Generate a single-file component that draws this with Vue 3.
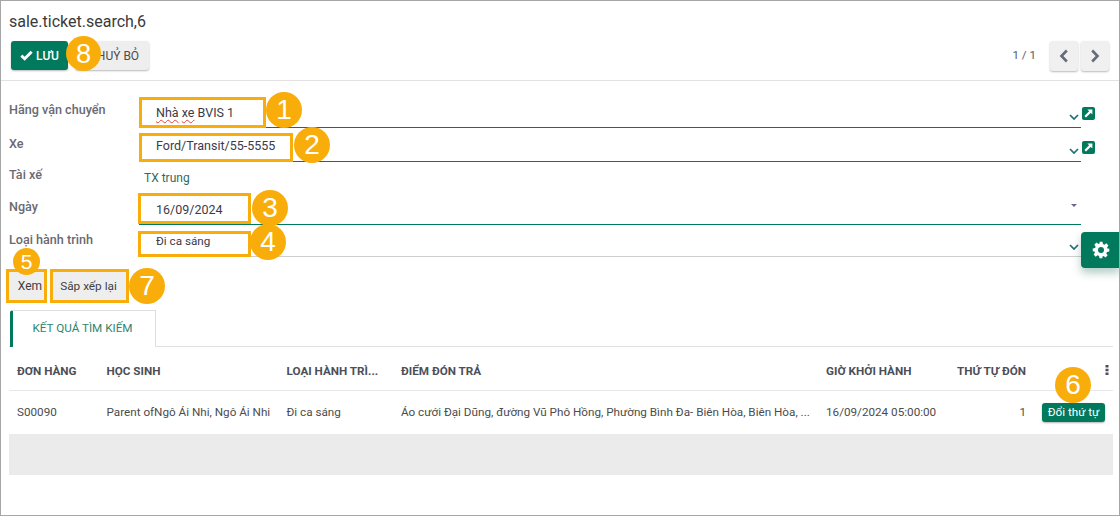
<script setup>
const marks = [
  { n: 1, x: 266, y: 92, s: 36 },
  { n: 2, x: 294, y: 127, s: 36 },
  { n: 3, x: 252, y: 190, s: 36 },
  { n: 4, x: 250, y: 224, s: 36 },
  { n: 5, x: 13, y: 248, s: 27 },
  { n: 6, x: 1055, y: 367, s: 36 },
  { n: 7, x: 129, y: 268, s: 36 },
  { n: 8, x: 66, y: 36, s: 35 },
]
const boxes = [
  { x: 139, y: 97, w: 127, h: 31 },
  { x: 139, y: 133, w: 154, h: 29 },
  { x: 138, y: 193, w: 113, h: 31 },
  { x: 138, y: 231, w: 113, h: 26 },
  { x: 6, y: 269, w: 41, h: 34 },
  { x: 50, y: 269, w: 79, h: 34 },
]
const rows = [
  { label: 'Hãng vận chuyển', value: 'Nhà xe BVIS 1', kind: 'm2o', cls: 'r1', spell: true },
  { label: 'Xe', value: 'Ford/Transit/55-5555', kind: 'm2o', cls: 'r2' },
  { label: 'Tài xế', value: 'TX trung', kind: 'text', cls: 'r3' },
  { label: 'Ngày', value: '16/09/2024', kind: 'date', cls: 'r4' },
  { label: 'Loại hành trình', value: 'Đi ca sáng', kind: 'select', cls: 'r5' },
]
function box(b) {
  return { left: b.x + 'px', top: b.y + 'px', width: b.w + 'px', height: b.h + 'px' }
}
function mark(m) {
  return { left: m.x + 'px', top: m.y + 'px', width: m.s + 'px', height: m.s + 'px', fontSize: (m.s * 0.78) + 'px' }
}
</script>

<template>
  <div class="page">
    <header class="head">
      <div class="title">sale.ticket.search,6</div>
      <div class="bar">
        <button class="btn primary"><svg class="check" viewBox="0 0 14 12"><path d="M1.4 6.2 5 9.6 12.6 2" fill="none" stroke="#fff" stroke-width="3.2"/></svg>LƯU</button>
        <button class="btn cancel">HUỶ BỎ</button>
        <span class="pager">1 / 1</span>
        <button class="btn nav"><svg viewBox="0 0 10 14" width="10" height="14"><path d="M7.8 1.5 2.5 7l5.3 5.5" fill="none" stroke="#666a7a" stroke-width="2.6"/></svg></button>
        <button class="btn nav"><svg viewBox="0 0 10 14" width="10" height="14"><path d="M2.2 1.5 7.5 7l-5.3 5.5" fill="none" stroke="#666a7a" stroke-width="2.6"/></svg></button>
      </div>
    </header>

    <main class="form">
      <div v-for="r in rows" :key="r.label" class="row" :class="r.cls">
        <label class="label">{{ r.label }}</label>
        <div class="field" :class="r.kind">
          <span class="val"><template v-if="r.spell"><span class="wavy">Nhà</span> <span class="wavy">xe</span> BVIS 1</template><template v-else>{{ r.value }}</template></span>
          <svg v-if="r.kind === 'm2o' || r.kind === 'select'" class="chev" viewBox="0 0 10 6"><path d="M1 1l4 4 4-4" fill="none" stroke="#1b6f78" stroke-width="1.7"/></svg>
          <svg v-if="r.kind === 'date'" class="caret" viewBox="0 0 6 3"><path d="M0 0h6L3 3z" fill="#6b6590"/></svg>
        </div>
        <span v-if="r.kind === 'm2o'" class="ext"><svg viewBox="0 0 13 13"><path d="M3.2 9.8 8.6 4.4" fill="none" stroke="#fff" stroke-width="2.2"/><path d="M5.4 2.6h5v5z" fill="#fff"/></svg></span>
      </div>

      <div class="actions">
        <button class="btn act xem">Xem</button>
        <button class="btn act sort">Sắp xếp lại</button>
      </div>

      <div class="tabs"><div class="tab">KẾT QUẢ TÌM KIẾM</div></div>

      <table class="grid">
        <colgroup>
          <col class="c1"><col class="c2"><col class="c3"><col class="c4"><col class="c5"><col class="c6"><col class="c7">
        </colgroup>
        <thead>
          <tr>
            <th>ĐƠN HÀNG</th><th>HỌC SINH</th><th>LOẠI HÀNH TRÌ...</th><th>ĐIỂM ĐÓN TRẢ</th><th>GIỜ KHỞI HÀNH</th><th class="num">THỨ TỰ ĐÓN</th>
            <th class="more"><svg viewBox="0 0 4 10" width="4" height="10"><path d="M0.5 0h3v2.4h-3zM0.5 3.8h3v2.4h-3zM0.5 7.6h3V10h-3z" fill="#4a4f5e"/></svg></th>
          </tr>
        </thead>
        <tbody>
          <tr>
            <td>S00090</td><td>Parent ofNgô Ái Nhi, Ngô Ái Nhi</td><td>Đi ca sáng</td>
            <td class="clip">Áo cưới Đại Dũng, đường Vũ Phô Hồng, Phường Bình Đa- Biên Hòa, Biên Hòa, ...</td>
            <td>16/09/2024 05:00:00</td><td class="num">1</td>
            <td class="cellbtn"><button class="swap">Đổi thứ tự</button></td>
          </tr>
        </tbody>
      </table>
      <div class="band"></div>
    </main>

    <div class="gear">
      <svg viewBox="0 0 24 24" width="18" height="18"><path fill="#fff" fill-rule="evenodd" d="M10 1h4l.6 3.1 1.9.8 2.6-1.8 2.8 2.8-1.8 2.6.8 1.9L23 10v4l-3.1.6-.8 1.9 1.8 2.6-2.8 2.8-2.6-1.8-1.9.8L14 23h-4l-.6-3.1-1.9-.8-2.6 1.8-2.8-2.8 1.8-2.6-.8-1.9L1 14v-4l3.1-.6.8-1.9-1.8-2.6 2.8-2.8 2.6 1.8 1.9-.8zM12 8a4 4 0 1 0 0 8 4 4 0 0 0 0-8z"/></svg>
    </div>

    <div v-for="(b, i) in boxes" :key="'b' + i" class="hl" :style="box(b)"></div>
    <div v-for="m in marks" :key="m.n" class="mark" :style="mark(m)">{{ m.n }}</div>
  </div>
</template>

<style>
html, body { margin: 0; padding: 0; background: #fff; }
</style>

<style scoped>
.page {
  position: relative;
  width: 1120px;
  height: 516px;
  box-sizing: border-box;
  border: 1px solid #a6a6a6;
  background: #fff;
  overflow: hidden;
  font-family: Roboto, "Noto Sans", sans-serif;
  font-size: 12px;
  color: #4c4c4c;
}
.head { height: 80px; box-sizing: border-box; border-bottom: 1px solid #e2e2e2; padding: 11px 10px 0 8px; }
.title { font-size: 16px; line-height: 19px; color: #3a3a3a; }
.bar { display: flex; align-items: flex-start; margin-top: 10px; padding-left: 2px; }
.btn {
  border: 0; font-family: inherit; font-size: 12px; border-radius: 3px; padding: 0;
  display: inline-flex; align-items: center; justify-content: center;
  box-shadow: 0 1px 2px rgba(0,0,0,.28); cursor: pointer;
}
.primary { width: 57px; height: 29px; background: #00795c; color: #fff; font-weight: 500; }
.check { width: 13px; height: 11px; margin-right: 3px; }
.cancel { width: 74px; height: 29px; margin-left: 7px; padding-left: 12px; background: #eeeeee; color: #4c4c4c; font-weight: 400; }
.pager { margin-left: auto; margin-right: 11px; line-height: 29px; font-size: 11.6px; color: #555b66; }
.nav { width: 28px; height: 30px; background: #f0f0f0; margin-left: 3px; }

.form { padding: 0 6px 0 8px; }
.row { position: relative; display: flex; }
.label { width: 130px; flex: none; font-size: 12.6px; font-weight: 500; color: #6a6a72; }
.field { flex: none; width: 942px; box-sizing: border-box; display: flex; align-items: center; padding-left: 17px; font-size: 12.5px; color: #3b3b48; border-bottom: 1px solid #00795c; position: relative; }
.val { flex: 1; }
.wavy { text-decoration: underline wavy #e0453a 1px; text-underline-offset: 2px; }
.chev { width: 10px; height: 6px; position: absolute; right: 2px; bottom: 7px; }
.caret { width: 6px; height: 3px; position: absolute; right: 4px; top: 12px; }
.ext { position: absolute; left: 1073px; width: 13px; height: 13px; background: #00795c; border-radius: 2px; display: flex; }
.ext svg { width: 13px; height: 13px; }
.r1 { margin-top: 17px; }
.r1 .label { padding-top: 4px; }
.r1 .field { height: 30px; padding-top: 0; }
.r1 .ext { top: 9px; }
.r2 { margin-top: 3px; }
.r2 .label { padding-top: 5px; }
.r2 .field { height: 31px; padding-bottom: 1px; }
.r2 .ext { top: 10px; }
.r3 { margin-top: 4px; height: 23px; }
.r3 .label { padding-top: 1px; }
.r3 .field { border: 0; color: #2d6d63; padding-left: 5px; padding-top: 0; font-size: 12px; }
.r4 { margin-top: 3px; }
.r4 .label { padding-top: 7px; }
.r4 .field { height: 33px; padding-top: 2px; }
.r5 { margin-top: 0; }
.r5 .label { padding-top: 7px; }
.r5 .field { height: 32px; border-bottom-color: #cfcfcf; padding-top: 0; padding-bottom: 0; font-size: 11.7px; }
.r5 .val { position: relative; top: 0; }
.r5 .chev { bottom: 6px; }

.actions { display: flex; gap: 9px; margin-top: 13px; margin-left: -1px; }
.act { height: 31px; background: #eeeeee; color: #3f3f3f; box-shadow: none; border-radius: 2px; font-weight: 400; }
.xem { width: 36px; padding-left: 8px; }
.sort { width: 73px; padding-right: 2px; font-size: 11.8px; }

.tabs { margin-top: 9px; height: 36px; border-bottom: 1px solid #e2e2e2; }
.tab {
  width: 146px; height: 37px; box-sizing: border-box; margin-left: 1px; padding-right: 3px;
  border: 1px solid #dedede; border-bottom: 0; border-left: 3px solid #00795c; border-radius: 3px 0 0 0;
  background: #fff; color: #2e8570; font-size: 11.7px; line-height: 34px; text-align: center;
}
.grid { border-collapse: collapse; table-layout: fixed; width: 1104px; }
.c1 { width: 89.5px; } .c2 { width: 180px; } .c3 { width: 114.5px; } .c4 { width: 425px; } .c5 { width: 120px; } .c6 { width: 88px; } .c7 { width: 87px; }
th { height: 43px; box-sizing: border-box; padding: 5px 0 0 8px; text-align: left; font-size: 11.7px; font-weight: 700; color: #4c4f58; border-bottom: 1px solid #e8e8e8; white-space: nowrap; }
td { height: 44px; box-sizing: border-box; padding: 0 0 0 8px; font-size: 11.7px; color: #4c4c4c; white-space: nowrap; }
th.num, td.num { text-align: right; padding-left: 0; }
.clip { overflow: hidden; }
th.more { text-align: right; padding-right: 4px; }
.cellbtn { padding: 0 8px 0 0; text-align: right; }
.swap { width: 63px; height: 19px; padding: 0; border: 0; border-radius: 3px; background: #00795c; color: #fff; font: 400 11.7px Roboto, sans-serif; box-shadow: 0 1px 2px rgba(0,0,0,.3); }
.band { width: 1104px; height: 41px; background: #ebebeb; }

.gear {
  position: absolute; left: 1080px; top: 231px; width: 39px; height: 36px;
  background: #00795c; border-radius: 4px 0 0 4px;
  display: flex; align-items: center; justify-content: center;
  box-shadow: 0 5px 8px rgba(0,90,70,.3);
}
.hl { position: absolute; box-sizing: border-box; border: 3px solid #f9ad0a; margin: -1px 0 0 -1px; }
.mark {
  position: absolute; margin: -1px 0 0 -1px; border-radius: 50%; background: #f9ad0a; color: #fff;
  display: flex; align-items: center; justify-content: center;
  font-family: "Liberation Sans", Arial, sans-serif;
}
</style>
